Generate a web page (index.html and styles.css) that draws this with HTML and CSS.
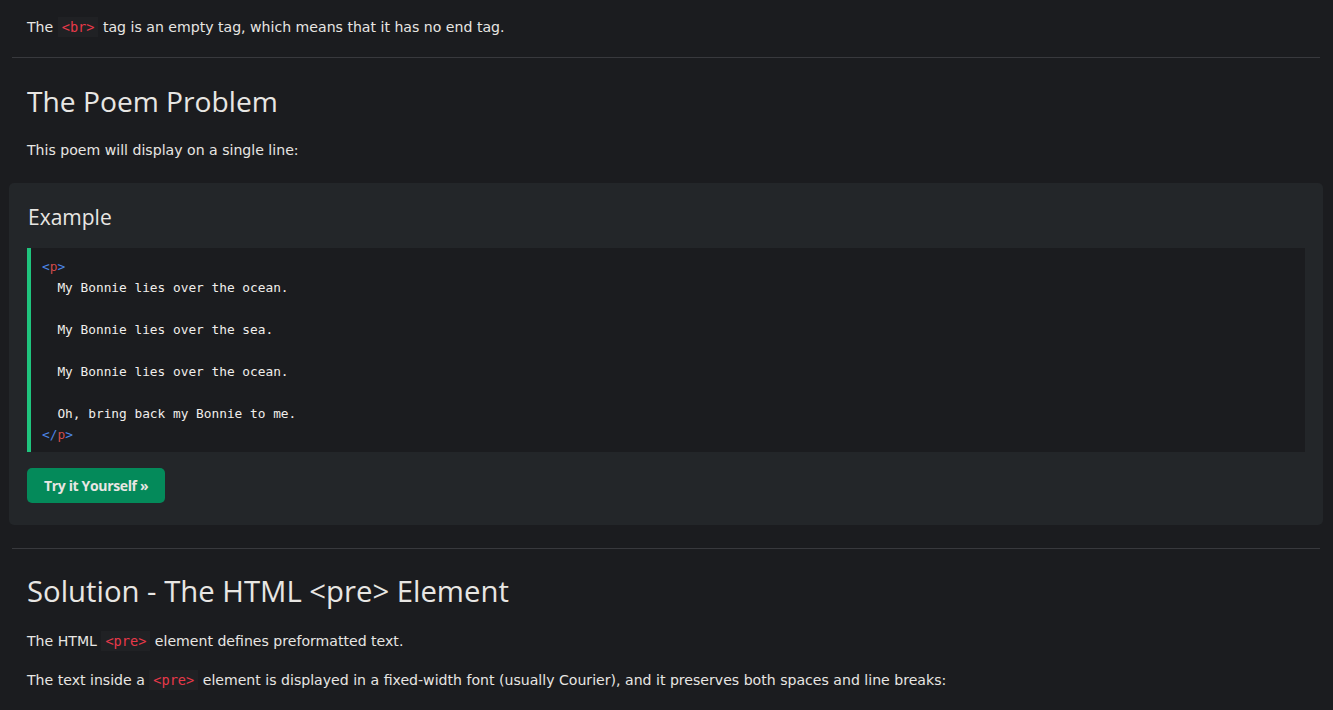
FILE: index.html
```html
<!DOCTYPE html>
<html lang="en">
<head>
<meta charset="utf-8">
<title>HTML pre</title>
<link rel="stylesheet" href="styles.css">
</head>
<body>
<main class="main">
  <p class="para first">The <code class="tag">&lt;br&gt;</code> tag is an empty tag, which means that it has no end tag.</p>
  <hr class="rule">
  <h2 class="heading">The Poem Problem</h2>
  <p class="para intro">This poem will display on a single line:</p>
  <section class="example">
    <h3 class="example-title">Example</h3>
    <div class="code"><span class="br">&lt;</span><span class="tn">p</span><span class="br">&gt;</span>
  My Bonnie lies over the ocean.

  My Bonnie lies over the sea.

  My Bonnie lies over the ocean.

  Oh, bring back my Bonnie to me.
<span class="br">&lt;/</span><span class="tn">p</span><span class="br">&gt;</span></div>
    <a class="try-btn">Try it Yourself »</a>
  </section>
  <hr class="rule rule2">
  <h2 class="heading heading2">Solution - The HTML &lt;pre&gt; Element</h2>
  <p class="para p3">The HTML <code class="tag">&lt;pre&gt;</code> element defines preformatted text.</p>
  <p class="para p4">The text inside a <code class="tag">&lt;pre&gt;</code> element is displayed in a fixed-width font (usually Courier), and it preserves both spaces and line breaks:</p>
</main>
</body>
</html>
```
FILE: styles.css
```css
html, body {
  margin: 0;
  padding: 0;
  background: #1b1c1f;
  color: #e8e6e3;
}
body {
  font-family: "DejaVu Sans", Verdana, sans-serif;
  font-size: 14.1px;
  height: 710px;
  overflow: hidden;
}
.main {
  padding: 0 13px 0 12px;
}
.para {
  margin: 0;
  padding-left: 15px;
  line-height: 22.5px;
}
.first { padding-top: 16px; }
.tag {
  font-family: "DejaVu Sans Mono", Consolas, monospace;
  font-size: 13.6px;
  color: #e8394a;
  background: #202124;
  padding: 2px 4px;
}
.rule {
  border: 0;
  border-top: 1px solid #38393d;
  margin: 18px 0 0 0;
  height: 0;
}
.heading {
  font-family: "Open Sans", "Segoe UI", sans-serif;
  font-weight: 400;
  font-size: 28.2px;
  line-height: 48px;
  margin: 19px 0 0 0;
  padding-left: 15px;
}
.intro { margin-top: 14px; }
.example {
  margin: 22px -3px 0 -3px;
  background: #232629;
  border-radius: 5px;
  padding: 16px 18px 22px 18px;
}
.example-title {
  font-family: "Open Sans", "Segoe UI", sans-serif;
  font-weight: 400;
  font-size: 21px;
  line-height: 36px;
  margin: 0 0 13px 1px;
}
.code {
  background: #1b1c1f;
  border-left: 4px solid #1fc47d;
  padding: 8px 12px 7px 11px;
  white-space: pre;
  font-family: "DejaVu Sans Mono", Consolas, monospace;
  font-size: 12.8px;
  line-height: 21px;
  color: #f0eeeb;
}
.br { color: #4d86e6; }
.tn { color: #cf4b4b; }
.try-btn {
  display: inline-block;
  margin-top: 16px;
  background: #048a5a;
  color: #e8e6e3;
  border-radius: 5px;
  font-family: "Open Sans", sans-serif;
  font-weight: 700;
  font-size: 14px;
  letter-spacing: -0.35px;
  line-height: 35px;
  padding: 0 17px;
  text-decoration: none;
}
.rule2 { margin-top: 23px; }
.heading2 { margin-top: 18px; font-size: 29.3px; }
.p3 { margin-top: 15px; }
.p4 { margin-top: 16px; }
```
